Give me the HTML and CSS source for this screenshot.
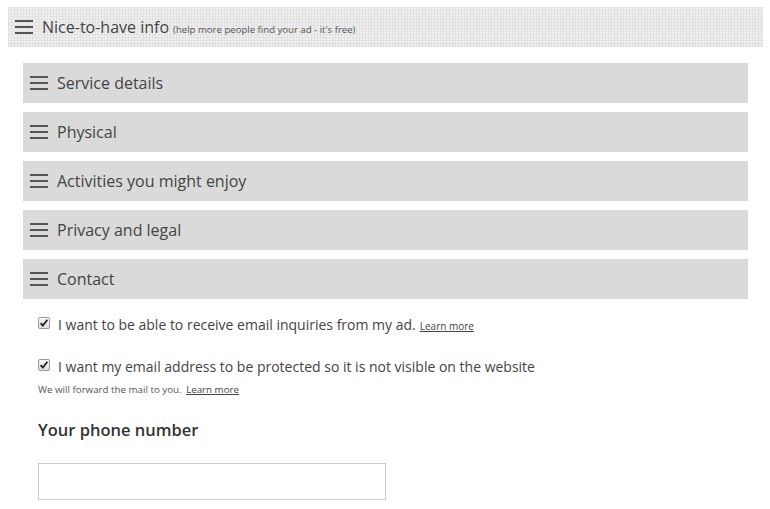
FILE: index.html
```html
<!DOCTYPE html>
<html lang="en">
<head>
    <meta charset="UTF-8">
    <title>Nice-to-have info</title>
    <link rel="stylesheet" href="styles.css">
</head>
<body>

    <div class="group-head">
        <svg class="burger" width="18" height="14" viewBox="0 0 18 14"><rect y="0" width="18" height="2"/><rect y="6" width="18" height="2"/><rect y="12" width="18" height="2"/></svg>
        <span class="group-title">Nice-to-have info</span>
        <span class="group-note">(help more people find your ad - it's free)</span>
    </div>

    <div class="panels">
        <div class="panel-head">
            <svg class="burger" width="18" height="14" viewBox="0 0 18 14"><rect y="0" width="18" height="2"/><rect y="6" width="18" height="2"/><rect y="12" width="18" height="2"/></svg>
            Service details
        </div>
        <div class="panel-head">
            <svg class="burger" width="18" height="14" viewBox="0 0 18 14"><rect y="0" width="18" height="2"/><rect y="6" width="18" height="2"/><rect y="12" width="18" height="2"/></svg>
            Physical
        </div>
        <div class="panel-head">
            <svg class="burger" width="18" height="14" viewBox="0 0 18 14"><rect y="0" width="18" height="2"/><rect y="6" width="18" height="2"/><rect y="12" width="18" height="2"/></svg>
            Activities you might enjoy
        </div>
        <div class="panel-head">
            <svg class="burger" width="18" height="14" viewBox="0 0 18 14"><rect y="0" width="18" height="2"/><rect y="6" width="18" height="2"/><rect y="12" width="18" height="2"/></svg>
            Privacy and legal
        </div>
        <div class="panel-head">
            <svg class="burger" width="18" height="14" viewBox="0 0 18 14"><rect y="0" width="18" height="2"/><rect y="6" width="18" height="2"/><rect y="12" width="18" height="2"/></svg>
            Contact
        </div>

        <!-- Contact panel body -->
        <div class="panel-body">
            <label class="check-row">
                <svg class="tick" width="12" height="12" viewBox="0 0 12 12"><defs><linearGradient id="boxfill" x1="0" y1="0" x2="0" y2="1"><stop offset="0" stop-color="#fafafa"/><stop offset="1" stop-color="#dedede"/></linearGradient></defs><rect x="0.5" y="0.5" width="11" height="11" rx="1.5" fill="url(#boxfill)" stroke="#9a9a9a"/><path d="M2.6 6.2 L4.8 8.6 L9.4 2.8" fill="none" stroke="#222" stroke-width="1.8"/></svg>
                <span>I want to be able to receive email inquiries from my ad.</span>
                <a href="#" class="more">Learn more</a>
            </label>
            <label class="check-row second">
                <svg class="tick" width="12" height="12" viewBox="0 0 12 12"><rect x="0.5" y="0.5" width="11" height="11" rx="1.5" fill="url(#boxfill)" stroke="#9a9a9a"/><path d="M2.6 6.2 L4.8 8.6 L9.4 2.8" fill="none" stroke="#222" stroke-width="1.8"/></svg>
                <span>I want my email address to be protected so it is not visible on the website</span>
            </label>
            <p class="hint">We will forward the mail to you. <a href="#" class="more">Learn more</a></p>

            <h3 class="field-label">Your phone number</h3>
            <input type="text" class="phone">
        </div>
    </div>

</body>
</html>
```

FILE: styles.css
```css
body { margin: 7px 7px 0 8px; font-family: "Open Sans", Arial, sans-serif; color: #444; }
.burger { fill: #555; flex: none; }

.group-head { display: flex; align-items: center; height: 40px; padding-left: 7px; background-color: #f0f0f0; background-image: linear-gradient(90deg, #e0e0e0 1px, transparent 1px), linear-gradient(#e3e3e3 1px, transparent 1px); background-size: 3px 3px; }
.group-head .burger { margin-right: 9px; }
.group-title { font-size: 16px; color: #444; }
.group-note { font-size: 9.6px; margin-left: 4px; margin-top: 4px; color: #555; }

.panels { margin: 16px 15px 0 15px; }
.panel-head { display: flex; align-items: center; height: 40px; margin-bottom: 9px; padding-left: 7px; background: #dadada; font-size: 16px; color: #444; }
.panel-head .burger { margin-right: 9px; }

.panel-body { padding: 7px 15px 0 15px; }
.check-row { display: flex; align-items: center; font-size: 14px; color: #444; }
.check-row .tick { flex: none; margin: -3px 8px 0 0; }
.check-row.second { margin-top: 23px; }
.more { font-size: 10px; color: #444; margin-left: 4px; margin-top: 3px; }
.hint { font-size: 9.75px; color: #555; margin: 7px 0 0 0; }
.hint .more { font-size: 9.75px; margin-left: 2px; }

.field-label { font-size: 16.5px; font-weight: 600; color: #333; margin: 22px 0 0 0; }
.phone { display: block; width: 348px; height: 37px; box-sizing: border-box; margin-top: 22px; border: 1px solid #ccc; }
```
